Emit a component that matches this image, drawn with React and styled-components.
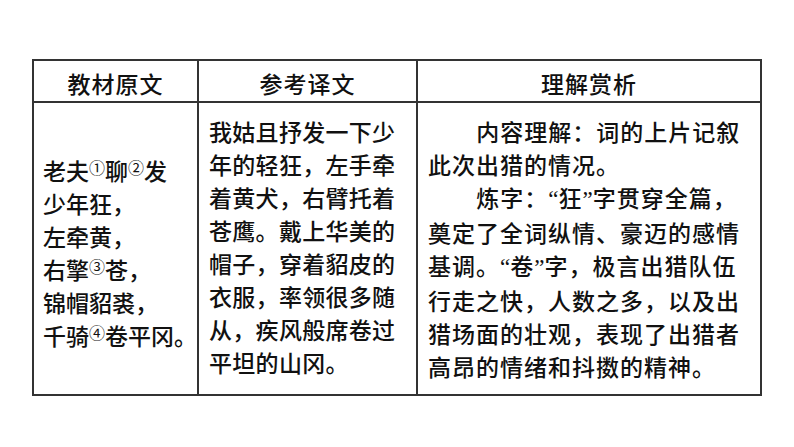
import React from "react";
import styled, { createGlobalStyle } from "styled-components";

const GlobalStyle = createGlobalStyle`
  html, body {
    margin: 0;
    padding: 0;
    background: #ffffff;
  }
  body {
    font-family: "Noto Sans CJK SC", "Noto Sans", sans-serif;
    color: #111;
  }
`;

const Page = styled.div`
  width: 794px;
  height: 447px;
  box-sizing: border-box;
  padding: 59px 0 0 32px;
`;

const Table = styled.table`
  border-collapse: collapse;
  table-layout: fixed;
  width: 728px;
  font-size: 23px;
  font-weight: 500;
  color: #111;

  th,
  td {
    border: 2px solid #333;
  }
`;

const HeadCell = styled.th`
  height: 42px;
  padding: 4px 0 0;
  box-sizing: border-box;
  font-weight: 500;
  text-align: center;
  letter-spacing: 1px;
  line-height: 36px;
`;

const Cell = styled.td`
  vertical-align: ${(p) => (p.$middle ? "middle" : "top")};
  padding: ${(p) => (p.$middle ? "8px 0 0 9px" : "12px 0 11px 10px")};
  letter-spacing: ${(p) => p.$spacing || "0px"};
`;

const Line = styled.div`
  white-space: nowrap;
  line-height: 33px;
  padding-left: ${(p) => (p.$indent ? "2.1em" : "0")};
`;

const Note = styled.sup`
  font-size: 16px;
  font-weight: 400;
  line-height: 0;
  vertical-align: 6px;
  letter-spacing: 0;
`;

const Quote = styled.span`
  font-family: "Liberation Serif", serif;
  letter-spacing: 0;
`;

const original = [
  <>老夫<Note>①</Note>聊<Note>②</Note>发</>,
  "少年狂，",
  "左牵黄，",
  <>右擎<Note>③</Note>苍，</>,
  "锦帽貂裘，",
  <>千骑<Note>④</Note>卷平冈。</>,
];

const translation = [
  "我姑且抒发一下少",
  "年的轻狂，左手牵",
  "着黄犬，右臂托着",
  "苍鹰。戴上华美的",
  "帽子，穿着貂皮的",
  "衣服，率领很多随",
  "从，疾风般席卷过",
  "平坦的山冈。",
];

const analysis = [
  { text: "内容理解：词的上片记叙", indent: true },
  { text: "此次出猎的情况。" },
  {
    text: (
      <>
        炼字：<Quote>“</Quote>狂<Quote>”</Quote>字贯穿全篇，
      </>
    ),
    indent: true,
  },
  { text: "奠定了全词纵情、豪迈的感情" },
  {
    text: (
      <>
        基调。<Quote>“</Quote>卷<Quote>”</Quote>字，极言出猎队伍
      </>
    ),
  },
  { text: "行走之快，人数之多，以及出" },
  { text: "猎场面的壮观，表现了出猎者" },
  { text: "高昂的情绪和抖擞的精神。" },
];

export default function App() {
  return (
    <Page>
      <GlobalStyle />
      <Table>
        <colgroup>
          <col style={{ width: 165 }} />
          <col style={{ width: 219 }} />
          <col style={{ width: 344 }} />
        </colgroup>
        <thead>
          <tr>
            <HeadCell>教材原文</HeadCell>
            <HeadCell>参考译文</HeadCell>
            <HeadCell>理解赏析</HeadCell>
          </tr>
        </thead>
        <tbody>
          <tr>
            <Cell $middle>
              {original.map((l, i) => (
                <Line key={i}>{l}</Line>
              ))}
            </Cell>
            <Cell $spacing="0.3px">
              {translation.map((l, i) => (
                <Line key={i}>{l}</Line>
              ))}
            </Cell>
            <Cell $spacing="1px">
              {analysis.map((l, i) => (
                <Line key={i} $indent={l.indent}>
                  {l.text}
                </Line>
              ))}
            </Cell>
          </tr>
        </tbody>
      </Table>
    </Page>
  );
}
